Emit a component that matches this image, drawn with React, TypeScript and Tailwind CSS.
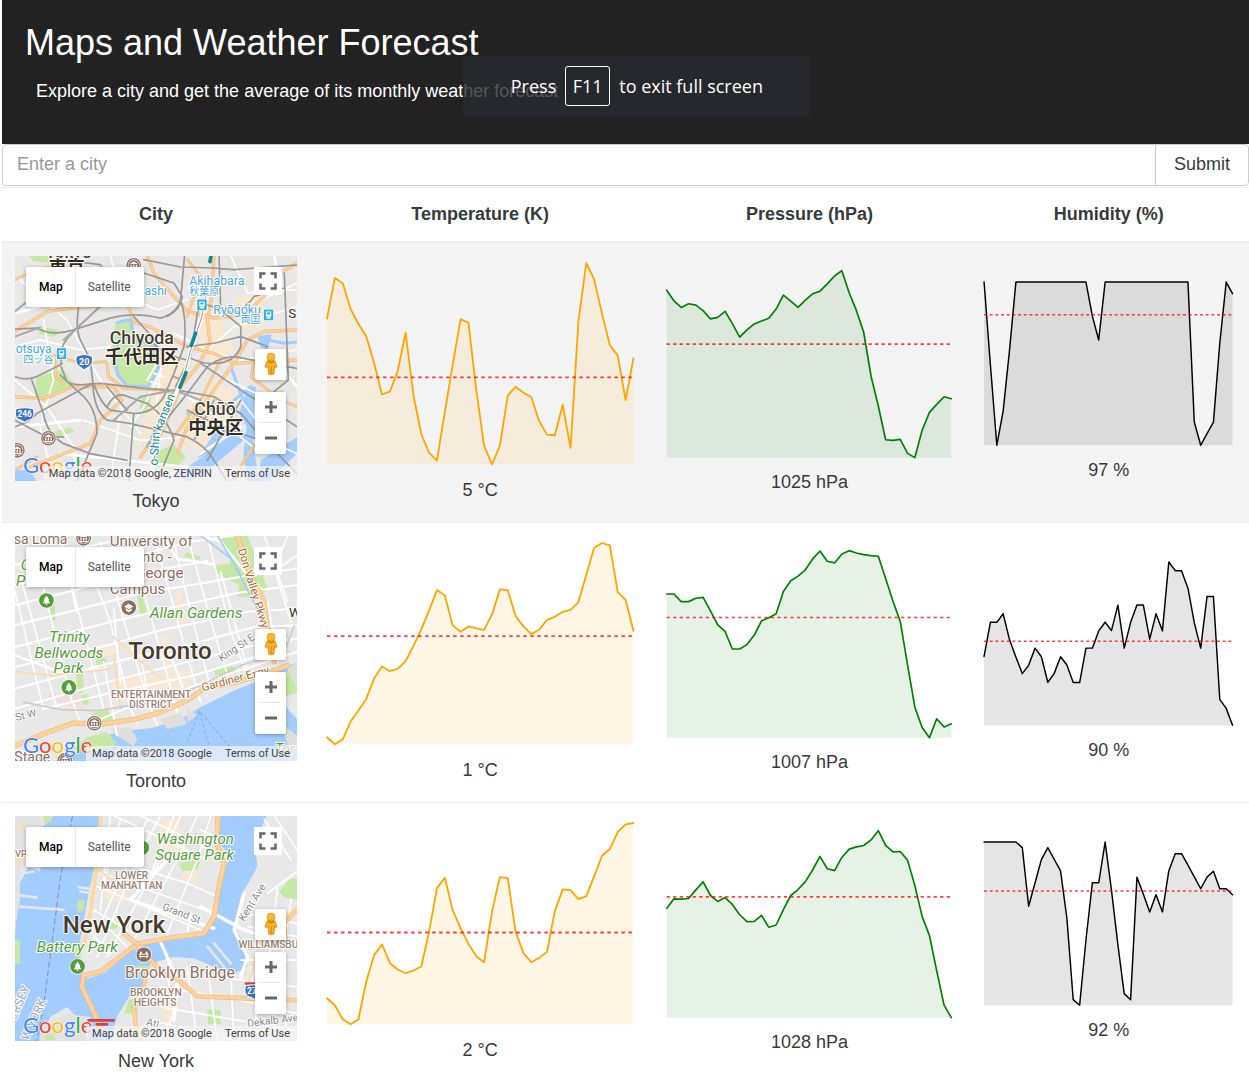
import React from "react";

type Series = { points: number[]; mean: number };

type City = {
  name: string;
  attribution: string;
  temperature: string;
  pressure: string;
  humidity: string;
  temperatureSeries: Series;
  pressureSeries: Series;
  humiditySeries: Series;
  map: React.ReactNode;
};

const PARK = "#c5e8a5";
const WATER = "#a3ccff";
const STONE = "#8d6e5e";
const GREEN = "#569d3c";

/* ---------- charts ---------- */

// Points are distances below the chart's ceiling, so larger values sit lower.
function Sparkline({ series, color, label }: { series: Series; color: string; label: string }) {
  const left = 5;
  const width = 306;
  const top = 5;
  const height = 201;
  const min = Math.min(...series.points);
  const max = Math.max(...series.points);
  const y = (v: number) => top + ((v - min) / (max - min)) * height;
  const x = (i: number) => left + (i / (series.points.length - 1)) * width;
  const line = series.points.map((v, i) => `${x(i).toFixed(1)},${y(v).toFixed(1)}`).join(" ");
  return (
    <svg viewBox="0 0 316 211" className="block h-auto w-full" role="img" aria-label={label}>
      <polygon
        points={`${left},${top + height} ${line} ${left + width},${top + height}`}
        fill={color}
        fillOpacity="0.1"
      />
      <polyline points={line} fill="none" stroke={color} strokeWidth="1.8" strokeLinejoin="round" strokeLinecap="round" />
      <line
        x1={left}
        x2={left + width}
        y1={y(series.mean)}
        y2={y(series.mean)}
        stroke="red"
        strokeOpacity="0.75"
        strokeWidth="1.8"
        strokeDasharray="3.5 3.5"
      />
    </svg>
  );
}

/* ---------- map drawing helpers ---------- */

function Roads({ d, color = "#ffffff", width = 6 }: { d: string; color?: string; width?: number }) {
  return <path d={d} fill="none" stroke={color} strokeWidth={width} strokeLinejoin="round" strokeLinecap="round" />;
}

function Highway({ d, width = 10 }: { d: string; width?: number }) {
  return (
    <>
      <Roads d={d} color="#f3b877" width={width} />
      <Roads d={d} color="#fdd29c" width={width - 4} />
    </>
  );
}

type LabelProps = {
  x: number;
  y: number;
  size: number;
  color: string;
  children: string;
  italic?: boolean;
  weight?: number;
  anchor?: "start" | "middle" | "end";
  rotate?: number;
};

function Label({ x, y, size, color, children, italic, weight = 400, anchor = "start", rotate = 0 }: LabelProps) {
  return (
    <text
      x={x}
      y={y}
      fontSize={size}
      fill={color}
      stroke="#ffffff"
      strokeWidth="6"
      strokeLinejoin="round"
      paintOrder="stroke"
      fontStyle={italic ? "italic" : "normal"}
      fontWeight={weight}
      textAnchor={anchor}
      transform={rotate ? `rotate(${rotate} ${x} ${y})` : undefined}
    >
      {children}
    </text>
  );
}

function TreePin({ x, y }: { x: number; y: number }) {
  return (
    <g transform={`translate(${x} ${y})`}>
      <circle r="24" fill="#fff" />
      <circle r="22" fill={GREEN} />
      <path d="M0 -15 L9 -1 L6 0 L11 8 L2 8 L2 13 L-2 13 L-2 8 L-11 8 L-6 0 L-9 -1 Z" fill="#fff" />
    </g>
  );
}

function MuseumPin({ x, y }: { x: number; y: number }) {
  return (
    <g transform={`translate(${x} ${y})`}>
      <circle r="24" fill="#fff" />
      <circle r="20" fill="#fff" stroke={STONE} strokeWidth="4" />
      <circle r="16" fill={STONE} />
      <path d="M-12 -4 L0 -12 L12 -4 Z M-10 -2 h4 v9 h-4 Z M-2 -2 h4 v9 h-4 Z M6 -2 h4 v9 h-4 Z M-12 8 h24 v4 h-24 Z" fill="#fff" />
    </g>
  );
}

function StationPin({ x, y }: { x: number; y: number }) {
  return (
    <g transform={`translate(${x} ${y})`}>
      <rect x="-16" y="-18" width="32" height="36" fill="#fff" />
      <rect x="-14" y="-16" width="28" height="32" rx="2" fill="#2fb0ea" />
      <path d="M-8 -10 h16 v16 h-16 Z M-8 11 l4 -4 h8 l4 4 Z" fill="#fff" />
      <path d="M-5 -7 h10 v6 h-10 Z" fill="#2fb0ea" />
    </g>
  );
}

function Shield({ x, y, text, scale = 1 }: { x: number; y: number; text: string; scale?: number }) {
  return (
    <g transform={`translate(${x} ${y}) scale(${scale})`}>
      <path
        d="M-24 -16 Q-12 -22 0 -22 Q12 -22 24 -16 Q28 6 14 14 Q4 20 0 24 Q-4 20 -14 14 Q-28 6 -24 -16 Z"
        fill="#3b74c4"
        stroke="#fff"
        strokeWidth="3"
      />
      <text y="9" fontSize="27" fontWeight="700" fill="#fff" textAnchor="middle">
        {text}
      </text>
    </g>
  );
}

function WideShield({ x, y, text }: { x: number; y: number; text: string }) {
  return (
    <g transform={`translate(${x} ${y})`}>
      <path
        d="M-26 -16 Q0 -22 26 -16 Q32 8 18 16 Q8 20 0 24 Q-8 20 -18 16 Q-32 8 -26 -16 Z"
        fill="#3b74c4"
        stroke="#fff"
        strokeWidth="3"
      />
      <text y="9" fontSize="25" fontWeight="700" fill="#fff" textAnchor="middle">
        {text}
      </text>
    </g>
  );
}

const TokyoMap = (
  <svg viewBox="45 48 843 675" className="block h-full w-full" preserveAspectRatio="xMidYMid slice" aria-hidden="true">
    <rect x="45" y="48" width="843" height="675" fill="#e9e8e6" />
    <path d="M500 330 L560 360 L470 560 L400 640 L440 520 Z M560 500 L640 420 L720 470 L620 640 L540 600 Z M560 60 L600 180 L650 230 L700 330 L640 380 L600 320 Z M700 180 L780 160 L800 250 L720 280 Z" fill="#f8e8d0" />
    <path d="M345 250 L390 235 L402 275 L440 305 L472 312 L478 372 L462 412 L440 440 L372 436 L350 404 L332 372 Z" fill={PARK} />
    <path d="M110 412 L190 388 L222 432 L160 470 L128 488 L105 470 Z M425 470 L452 472 L440 520 L416 512 Z M85 48 L160 48 L150 70 L100 64 Z M120 262 L175 270 L165 290 L118 282 Z M455 640 L520 612 L556 650 L520 690 L460 690 Z M160 575 L210 562 L222 574 L172 590 Z M800 460 L846 450 L850 475 L800 480 Z" fill={PARK} />
    <Roads d="M350 248 L390 238 L400 285 L440 306 M470 318 L450 345 L478 375 L460 412 L442 440 L380 438 L352 405 L342 350 L358 290 Z" color={WATER} width={9} />
    <path d="M742 438 L765 440 L758 520 L770 560 L755 600 L775 723 L740 723 L728 640 L738 560 L715 520 Z M715 560 L738 592 L600 708 L560 723 L530 700 L620 640 Z M770 290 L812 282 L800 330 L780 322 Z M640 580 L700 556 L720 590 L620 640 L590 655 Z M45 690 L90 690 L110 723 L45 723 Z M780 660 L888 590 L888 640 L800 723 L770 723 Z" fill={WATER} />
    <Roads d="M700 480 L750 440 M800 300 L850 310 L888 306 M690 380 L742 520 M560 520 L680 500 L760 540" color={WATER} width={9} />
    <Roads d="M45 320 L120 300 L240 330 L330 320 M60 120 L200 240 L300 420 L420 580 M130 240 L160 420 L120 560 L160 720 M330 48 L360 160 L470 210 L560 180 M250 540 L420 600 L560 590 M45 420 L140 500 L220 620 L230 723 M600 200 L720 210 L888 130 M620 330 L720 360 L888 330 M560 470 L660 540 L780 640 M640 400 L850 500 M520 280 L620 330 L700 260 L888 200 M360 520 L330 720 M470 370 L440 420 M500 350 L430 500 L390 560 M690 48 L740 160 L888 150 M720 480 L820 610 L888 640 M460 400 L490 410 M450 425 L480 435 M485 350 L465 520" width={5} />
    <Roads d="M180 640 L560 680 M720 560 L600 640 M45 560 L240 540 M820 360 L888 440 M820 48 L840 160 M45 220 L120 200" color="#fff" width={8} />
    <Highway d="M45 275 L140 215 L220 205 L380 190 L402 248 L450 262 L560 320 L640 340 L700 370 L888 360" />
    <Highway d="M320 372 L325 410 L370 444 L420 446 L500 450 L525 480 L480 560 L420 650" />
    <Highway d="M640 48 L632 180 L620 240 L628 310 L590 380 L540 440 L500 540 L470 600" />
    <Highway d="M888 70 L820 110 L790 170 L730 225 L640 235 L560 215 L520 170 L460 100 L440 48" />
    <Highway d="M888 270 L790 275 L740 300 L700 370 L640 450 L560 560 L530 640" />
    <Highway d="M45 470 L130 475 L220 440 L340 440 L365 480 L300 540 L270 610 L180 645 L90 680" />
    <Highway d="M560 60 L600 110 L560 230 M660 360 L600 480 L520 590 M45 120 L110 90 L190 75" width={8} />
    <Highway d="M760 370 L750 410 L840 480 L888 500 M800 560 L730 660 L700 723 M45 690 L110 650" width={8} />
    <Highway d="M160 345 L240 370 L315 365 M190 430 L165 410 L170 350" width={8} />
    <Roads
      d="M45 268 L110 265 Q160 290 220 270 L330 235 Q400 215 480 235 Q530 220 540 180 L552 48 M45 410 Q80 425 120 405 L185 372 Q170 320 220 275 L300 198 L330 120 L300 75 L180 60 M540 180 Q560 240 550 320 L520 400 L490 470 Q460 520 400 520 L330 510 Q300 490 280 430 Q230 440 200 425 L180 372 M235 205 Q225 260 240 300 L270 360 L278 430 Q280 510 320 540 L390 550 L560 590 Q620 620 640 660 L680 723 M45 560 Q90 545 110 520 L230 455 Q270 430 300 430 L430 445 L520 452 M95 420 L130 520 Q140 580 190 610 L270 640 L380 660 M180 405 L240 460 Q290 500 290 580 L230 723 M400 520 L385 723 M320 500 Q340 460 370 465 L440 490 Q500 530 520 600 L470 723 M888 76 L700 90 L640 85 L540 82 L430 60 M600 190 L700 220 Q740 200 760 170 L850 145 M850 100 L862 420 L800 470 M560 350 Q610 375 640 370 Q700 370 720 320 L720 260 L660 210 L655 48 M530 450 L640 470 L720 520 L790 600 L888 700 M600 370 L690 430 L888 560 M720 480 L620 660 M480 560 L560 460 L620 380 Q660 350 700 350 L888 385 M500 230 Q540 210 545 170 L520 130 L430 100 M610 180 L590 220 L570 350 L525 440 M560 510 L660 560 L780 600 M400 230 L445 280 Q460 340 560 360 M800 320 L720 290 L640 310 L560 320 M320 440 L380 510 M45 540 L140 590 L190 590"
      color="#999999"
      width={5}
    />
    <Roads d="M340 540 L420 470 L520 450 L600 480 M45 215 L75 190 M45 290 L120 262 M520 410 L545 420 L510 470 L440 620 M640 480 L580 600 M190 300 L300 200" color="#a9a9a9" width={6} />
    <Roads d="M622 130 L604 230 L570 330 L552 400 L470 590 L450 723" color="#ffffff" width={11} />
    <Roads d="M622 130 L604 230 L570 330 L552 400" color="#9c9c9c" width={3} />
    <Roads d="M631 48 L628 66 M585 280 L572 316 M556 398 L538 442" color="#138796" width={11} />
    <MuseumPin x={145} y={594} />
    <MuseumPin x={52} y={630} />
    <MuseumPin x={400} y={77} />
    <Label x={205} y={54} size={52} color="#473c2b" weight={500} anchor="middle">Tokyo</Label>
    <Label x={200} y={102} size={54} color="#332c20" weight={700} anchor="middle">東京</Label>
    <Label x={566} y={135} size={37} color="#4aa9d8">Akihabara</Label>
    <Label x={566} y={165} size={30} color="#4aa9d8">秋葉原</Label>
    <Label x={432} y={165} size={36} color="#4aa9d8">ashi</Label>
    <Label x={638} y={224} size={37} color="#4aa9d8">Ryōgoku</Label>
    <Label x={720} y={251} size={29} color="#4aa9d8">両国</Label>
    <Label x={47} y={338} size={36} color="#4aa9d8">otsuya</Label>
    <Label x={70} y={369} size={30} color="#4aa9d8">四ッ谷</Label>
    <StationPin x={604} y={195} />
    <StationPin x={803} y={225} />
    <StationPin x={184} y={341} />
    <Label x={862} y={234} size={40} color="#332c20">S</Label>
    <Label x={424} y={312} size={53} color="#473c2b" weight={500} anchor="middle">Chiyoda</Label>
    <Label x={424} y={369} size={55} color="#332c20" weight={700} anchor="middle">千代田区</Label>
    <Label x={643} y={524} size={53} color="#473c2b" weight={500} anchor="middle">Chūō</Label>
    <Label x={645} y={581} size={55} color="#332c20" weight={700} anchor="middle">中央区</Label>
    <Label x={471} y={676} size={36} color="#138796" rotate={-86}>o-Shin</Label>
    <Label x={481} y={574} size={36} color="#138796" rotate={-68}>kansen</Label>
    <Shield x={252} y={366} text="20" />
    <WideShield x={74} y={522} text="246" />
  </svg>
);

const TorontoMap = (
  <svg viewBox="45 42 843 675" className="block h-full w-full" preserveAspectRatio="xMidYMid slice" aria-hidden="true">
    <rect x="45" y="42" width="843" height="675" fill="#e8e8e8" />
    <path d="M660 42 L740 42 L770 120 L800 200 L770 230 L710 225 L715 190 L640 150 L650 130 L690 125 Z M410 222 L425 220 L440 275 L420 280 Z M148 240 L162 236 L166 292 L150 298 Z M228 440 L248 440 L250 510 L232 515 Z M240 520 L265 515 L265 548 L245 548 Z M270 575 L320 560 L340 590 L300 600 Z M555 90 L600 105 L595 115 L550 105 Z M285 405 L318 410 L318 430 L290 430 Z M640 440 L700 432 L702 450 L645 462 Z" fill={PARK} />
    <path d="M330 475 L580 440 L560 520 L480 545 L340 535 Z M480 345 L500 340 L530 470 L500 480 Z M295 360 L340 370 L345 405 L300 400 Z M520 210 L540 205 L560 300 L540 305 Z" fill="#f8e9d6" />
    <path d="M130 515 L240 510 L250 560 L180 550 Z M640 530 L670 525 L665 555 L640 560 Z" fill="#f2dede" />
    <path d="M888 505 L830 525 L860 560 L888 590 L888 717 L160 717 L230 690 L260 660 L310 640 L380 625 L450 618 L540 590 L600 555 L700 505 L800 465 L835 445 L888 420 Z" fill={WATER} />
    <path d="M260 645 L320 630 L350 665 L275 690 L220 680 Z M820 470 L888 430 L888 510 L850 525 Z" fill={PARK} />
    <path d="M330 620 L390 615 L410 650 L400 672 L350 640 Z M560 555 L590 580 L560 600 Z M860 440 L888 420 L888 500 Z M840 600 L888 640 L888 680 L860 670 Z M480 590 L540 570 L560 605 L500 620 Z" fill="#dedfda" />
    <Roads d="M45 130 L240 80 L330 60 M45 190 L420 100 L560 62 L700 42 M45 250 L440 150 L620 118 M45 310 L420 215 L720 165 L888 140 M45 375 L330 300 L700 215 L888 190 M45 435 L340 365 L480 325 L740 270 L888 260 M45 500 L340 420 L560 370 L760 315 L888 310 M45 560 L320 480 L520 430 L760 370 L888 350 M130 560 L340 510 L580 460 L760 405 M280 600 L420 540 L560 500 L700 450 L888 390" width={6} />
    <Roads d="M60 160 L170 560 M110 120 L210 520 L240 600 M190 90 L250 330 L310 560 M250 90 L330 300 L390 560 L410 600 M300 60 L440 530 L470 610 M380 42 L470 350 L530 570 M460 42 L540 330 L600 540 M520 60 L570 270 L630 500 M560 42 L640 330 L690 490 M620 42 L690 330 L740 460 M660 150 L740 440 M800 240 L830 420 M45 210 L130 560 M310 420 L350 640 M340 260 L360 480 M420 400 L450 560 M860 42 L820 140 L870 300 M888 100 L820 150 M790 42 L860 240" width={5} />
    <Roads d="M45 400 L180 450 L320 440 M600 42 L660 60 L740 160 L780 200 M500 62 L530 112 L640 128 M510 400 L560 530 M180 42 L230 270" width={7} />
    <Roads d="M45 450 L160 460 L330 440 M340 400 L360 560 M340 345 L480 470" color="#fbdcb5" width={6} />
    <Roads d="M70 540 L180 562 L290 565 L420 545 L520 520 M520 520 L600 490 L720 430 L850 390 L880 310" color="#cccccc" width={5} />
    <Roads d="M600 42 L690 110 L790 300 M650 42 L720 160" color={WATER} width={5} />
    <path d="M560 660 L596 565 L700 690 M596 570 L640 717" fill="none" stroke="#82afea" strokeWidth="3" strokeDasharray="12 6" />
    <Highway d="M45 670 L130 635 L220 602 L300 606 L400 592 L480 570 L560 535 L610 500 L700 482 L790 455 L860 430" width={15} />
    <Highway d="M710 42 L725 90 L750 160 L790 240 L800 320 L820 420" width={15} />
    <Label x={41} y={66} size={42} color={STONE}>sa Loma</Label>
    <MuseumPin x={250} y={50} />
    <Label x={328} y={74} size={45} color={STONE}>University of</Label>
    <Label x={334} y={121} size={45} color={STONE}>Toronto -</Label>
    <Label x={340} y={168} size={45} color={STONE}>St. George</Label>
    <Label x={328} y={216} size={45} color={STONE}>Campus</Label>
    <g transform="translate(385 257)">
      <circle r="24" fill="#fff" />
      <circle r="22" fill={STONE} />
      <path d="M-14 -3 L0 -11 L14 -3 L0 5 Z M-9 2 L0 8 L9 2 V9 L0 14 L-9 9 Z" fill="#fff" />
    </g>
    <Label x={62} y={146} size={45} color={GREEN} italic>Christie</Label>
    <Label x={48} y={194} size={45} color={GREEN} italic>Pits</Label>
    <TreePin x={139} y={236} />
    <Label x={448} y={287} size={46} color={GREEN} italic>Allan Gardens</Label>
    <Label x={208} y={360} size={46} color={GREEN} italic anchor="middle">Trinity</Label>
    <Label x={206} y={407} size={46} color={GREEN} italic anchor="middle">Bellwoods</Label>
    <Label x={205} y={454} size={46} color={GREEN} italic anchor="middle">Park</Label>
    <TreePin x={206} y={496} />
    <Label x={508} y={411} size={72} color="#473c2b" weight={500} anchor="middle">Toronto</Label>
    <Label x={452} y={526} size={30} color="#9b8171" weight={500} anchor="middle">ENTERTAINMENT</Label>
    <Label x={451} y={556} size={30} color="#9b8171" weight={500} anchor="middle">DISTRICT</Label>
    <Label x={662} y={420} size={31} color="#888888" rotate={-34}>King St E</Label>
    <Label x={606} y={508} size={34} color="#a5692f" rotate={-15}>Gardiner Expy</Label>
    <Label x={711} y={84} size={34} color="#a5692f" rotate={73}>Don Valley Pkwy</Label>
    <Label x={864} y={286} size={40} color="#332c20">W</Label>
    <Label x={49} y={596} size={31} color="#888888" rotate={-14}>St W</Label>
    <MuseumPin x={282} y={603} />
    <MuseumPin x={194} y={714} />
    <Label x={43} y={720} size={42} color={STONE}>Stage</Label>
    <Label x={330} y={708} size={42} color="#6d8ac0">Toronto</Label>
    <Label x={822} y={696} size={42} color={GREEN} italic>Tor</Label>
  </svg>
);

const NewYorkMap = (
  <svg viewBox="45 48 843 675" className="block h-full w-full" preserveAspectRatio="xMidYMid slice" aria-hidden="true">
    <rect x="45" y="48" width="843" height="675" fill="#e8e8e8" />
    <path
      d="M160 48 L298 48 L285 190 L265 280 L240 420 L236 490 L262 535 L310 520 L390 455 L450 425 L600 405 L630 370 L650 250 L690 170 L655 130 L660 48 L798 48 L760 130 L770 200 L720 290 L700 380 L735 440 L740 500 L700 520 L640 500 L580 475 L520 470 L450 490 L430 560 L385 590 L350 650 L330 723 L170 723 L240 660 L200 620 L150 650 L120 723 L45 723 L45 400 L60 250 L85 200 L120 215 L130 150 L120 90 Z"
      fill={WATER}
    />
    <path d="M45 48 L120 48 L130 90 L105 190 L60 200 L60 300 L45 380 Z M120 680 L200 640 L270 650 L260 723 L120 723 Z" fill="#e2e2e2" />
    <path d="M130 48 L150 48 L155 66 L130 72 Z M232 302 L255 300 L248 335 L232 335 Z M535 190 L600 180 L590 210 L545 215 Z M330 370 L355 362 L350 385 L325 390 Z M45 420 L60 422 L60 490 L45 490 Z M620 628 L660 630 L660 670 L622 672 Z M865 240 L888 235 L888 300 L850 292 L835 275 Z M820 430 L860 428 L860 445 L822 445 Z M385 600 L420 590 L410 640 L370 640 Z M135 704 L160 700 L165 720 L135 720 Z M375 500 L445 495 L445 515 L375 515 Z M215 430 L248 430 L244 470 L225 470 Z" fill={PARK} />
    <path d="M310 270 L370 265 L385 300 L320 310 Z M470 60 L530 60 L560 160 L500 170 Z M545 215 L590 215 L590 255 L545 250 Z M480 630 L520 590 L540 630 L500 680 Z" fill="#f8e9d6" />
    <Roads d="M45 225 L100 215 M45 150 L120 145 M50 285 L110 293 M60 320 L190 330 M235 262 L275 268 M240 275 L275 280 M640 430 L690 490 M620 440 L670 500 M770 205 L815 220" color="#e3e6ea" width={8} />
    <Roads d="M600 90 L640 110 M340 48 L620 180 M310 120 L430 170 M300 220 L640 340 M290 260 L600 390 M300 170 L560 250 L650 290 M420 48 L650 160 M280 330 L400 400 M330 48 L300 330 M360 60 L310 250 M440 60 L270 440 M480 48 L410 180 L290 470 M540 48 L480 180 L320 470 M590 48 L540 160 L400 420 M630 48 L590 180 L500 400 M520 48 L440 250 M570 340 L560 400 M300 360 L380 440 M275 400 L330 460" width={5} />
    <Roads d="M790 60 L870 180 M820 48 L888 150 M720 480 L888 480 M730 340 L888 370 M740 380 L888 410 M830 260 L800 520 M870 300 L830 560 M560 520 L888 560 M480 560 L720 600 L888 640 M560 500 L590 723 M620 500 L650 723 M690 520 L700 723 M750 500 L770 700 M480 620 L888 690 M450 660 L720 723 M840 560 L860 723 M500 520 L520 640 L480 723 M888 215 L800 280" width={5} />
    <Roads d="M600 320 L720 385 L760 400 M480 425 L530 540 L520 660 M500 180 L390 300 M390 300 L640 385 M730 280 L700 390 L740 470 L720 530" width={10} />
    <Roads d="M301 48 L298 130 L272 330 L250 440" color="#fbd9a2" width={12} />
    <Roads d="M285 205 L330 235 L390 260 M45 190 L80 170 M45 90 L75 75 M888 320 L780 420 L740 560" color="#fbe0a8" width={7} />
    <path d="M217 48 L180 240 L150 470 L130 620 L110 723" fill="none" stroke="#7e92ae" strokeWidth="3" strokeDasharray="18 8" />
    <Highway d="M652 48 L648 130 L670 190 L655 260 L640 350 L610 400 L500 415 L410 432 L360 470 L300 515 L250 525 L245 560 L290 655 L300 690" width={15} />
    <Highway d="M370 400 L410 432 L440 470 L470 500 L540 545 L590 588 L750 595 L888 600" width={14} />
    <Highway d="M440 510 L430 560 L400 620 L408 690 L420 723 M888 330 L850 370 L855 440" width={12} />
    <Roads d="M265 660 L340 660 M290 672 L320 672 M735 550 L780 550" color="#d8403c" width={8} />
    <path d="M425 123 A21 21 0 0 1 425 165 Z" fill={GREEN} />
    <Label x={584} y={134} size={45} color={GREEN} italic anchor="middle">Washington</Label>
    <Label x={582} y={182} size={45} color={GREEN} italic anchor="middle">Square Park</Label>
    <Label x={394} y={238} size={30} color="#9b8171" weight={500} anchor="middle">LOWER</Label>
    <Label x={394} y={268} size={30} color="#9b8171" weight={500} anchor="middle">MANHATTAN</Label>
    <Label x={484} y={329} size={31} color="#888888" rotate={21}>Grand St</Label>
    <Label x={341} y={398} size={72} color="#473c2b" weight={500} anchor="middle">New York</Label>
    <Label x={231} y={457} size={46} color={GREEN} italic anchor="middle">Battery Park</Label>
    <TreePin x={232} y={499} />
    <g transform="translate(430 464)">
      <circle r="24" fill="#fff" />
      <circle r="22" fill={STONE} />
      <path d="M-14 5 H14 M-9 -9 V11 M9 -9 V11 M-14 1 Q-10 -3 -9 -8 Q0 8 9 -8 Q10 -3 14 1" fill="none" stroke="#fff" strokeWidth="3" />
    </g>
    <Label x={374} y={534} size={47} color={STONE}>Brooklyn Bridge</Label>
    <Label x={466} y={587} size={31} color="#9b8171" weight={500} anchor="middle">BROOKLYN</Label>
    <Label x={464} y={617} size={31} color="#9b8171" weight={500} anchor="middle">HEIGHTS</Label>
    <Label x={713} y={445} size={30} color="#9b8171" weight={500}>WILLIAMSBU</Label>
    <Label x={730} y={366} size={32} color="#888888" rotate={-58}>Kent Ave</Label>
    <Label x={741} y={680} size={31} color="#888888" rotate={-7}>Dekalb Ave</Label>
    <Label x={436} y={674} size={31} color="#888888" rotate={14}>Atl</Label>
    <Label x={45} y={173} size={28} color="#9b8171" weight={500}>VP</Label>
    <Label x={47} y={660} size={36} color="#a0a4aa" rotate={-66}>ERSEY</Label>
    <Label x={85} y={722} size={36} color="#a0a4aa" rotate={-66}>W YORK</Label>
    <WideShield x={760} y={573} text="278" />
  </svg>
);

/* ---------- map widget ---------- */

function Pegman() {
  return (
    <svg viewBox="0 0 14 24" className="h-6 w-[14px]" aria-hidden="true">
      <path d="M3 9 Q7 7 11 9 L13 15 L11.500 16 L10.500 14 L10 22 L7.500 23 L4.500 22 L4 14 L2.500 16 L1 15 Z" fill="#f5b024" stroke="#d98c12" strokeWidth="0.8" />
      <circle cx="7" cy="5" r="4" fill="#fbb829" stroke="#d98c12" strokeWidth="0.6" />
      <path d="M4 9 Q7 12 10 9" fill="none" stroke="#c47a10" strokeWidth="1.200" />
      <path d="M7 15 V22" stroke="#c47a10" strokeWidth="0.8" />
    </svg>
  );
}

function MapWidget({ city }: { city: City }) {
  return (
    <div className="relative h-[225px] overflow-hidden text-left font-[Roboto,'Noto_Sans_CJK_JP',sans-serif]">
      {city.map}
      <div className="absolute bottom-1 left-2 flex text-[22px] leading-6 [-webkit-text-stroke:1px_white] [paint-order:stroke_fill] font-[Lato,sans-serif]">
        <span className="text-[#4285f4]">G</span>
        <span className="text-[#ea4335]">o</span>
        <span className="text-[#fbbc05]">o</span>
        <span className="text-[#4285f4]">g</span>
        <span className="text-[#34a853]">l</span>
        <span className="text-[#ea4335]">e</span>
      </div>
      <div className="absolute bottom-0 right-0 flex h-[15px] bg-[#f5f5f5]/70 text-[11px] leading-[15px] text-[#444]">
        <span className="px-[6px]">{city.attribution}</span>
        <a href="#terms" className="px-[7px]">
          Terms of Use
        </a>
      </div>
      <div className="absolute left-[11px] top-[11px] flex h-10 rounded-[2px] bg-white text-xs shadow-[0_1px_4px_rgba(0,0,0,0.3)]">
        <button type="button" className="border-r border-[#e8e8e8] px-3 pl-[13px] font-medium text-black">
          Map
        </button>
        <button type="button" className="px-[13px] pl-3 text-[#565656]">
          Satellite
        </button>
      </div>
      <button
        type="button"
        aria-label="Toggle fullscreen view"
        className="absolute right-[15px] top-[11px] flex h-7 w-7 items-center justify-center bg-white"
      >
        <svg viewBox="0 0 18 18" className="h-[18px] w-[18px]" fill="none" stroke="#666" strokeWidth="2.500" aria-hidden="true">
          <path d="M1.500 6.500 V1.500 H6.500 M11.500 1.500 H16.500 V6.500 M16.500 11.500 V16.500 H11.500 M6.500 16.500 H1.500 V11.500" />
        </svg>
      </button>
      <div className="absolute right-[11px] top-[93px] flex flex-col gap-3">
        <button
          type="button"
          aria-label="Street View"
          className="flex h-[31px] w-[31px] items-center justify-center rounded-[2px] bg-white shadow-[0_1px_4px_rgba(0,0,0,0.3)]"
        >
          <Pegman />
        </button>
        <div className="flex w-[31px] flex-col items-center rounded-[2px] bg-white shadow-[0_1px_4px_rgba(0,0,0,0.3)]">
          <button type="button" aria-label="Zoom in" className="flex h-[30px] w-full items-center justify-center">
            <svg viewBox="0 0 12 12" className="h-3 w-3" stroke="#666" strokeWidth="3" aria-hidden="true">
              <path d="M0 6 H12 M6 0 V12" />
            </svg>
          </button>
          <div className="h-px w-[21px] bg-[#e6e6e6]" />
          <button type="button" aria-label="Zoom out" className="flex h-[31px] w-full items-center justify-center">
            <svg viewBox="0 0 12 12" className="h-3 w-3" stroke="#666" strokeWidth="3" aria-hidden="true">
              <path d="M0 6 H12" />
            </svg>
          </button>
        </div>
      </div>
    </div>
  );
}

/* ---------- data ---------- */

const cities: City[] = [
  {
    name: "Tokyo",
    attribution: "Map data ©2018 Google, ZENRIN",
    temperature: "5 °C",
    pressure: "1025 hPa",
    humidity: "97 %",
    map: TokyoMap,
    temperatureSeries: {
      mean: 412,
      points: [236, 114, 130, 207, 252, 289, 370, 463, 455, 393, 279, 465, 583, 639, 662, 515, 375, 238, 248, 450, 618, 673, 618, 467, 440, 458, 471, 543, 584, 586, 495, 624, 243, 69, 118, 220, 316, 346, 480, 355],
    },
    pressureSeries: {
      mean: 313,
      points: [150, 182, 202, 191, 195, 212, 237, 232, 214, 251, 292, 270, 252, 243, 235, 207, 165, 183, 202, 180, 161, 153, 131, 107, 91, 158, 212, 277, 410, 500, 602, 604, 601, 643, 656, 573, 519, 495, 472, 478],
    },
    humiditySeries: {
      mean: 224,
      points: [125, 375, 618, 515, 330, 125, 125, 125, 125, 125, 125, 125, 125, 125, 125, 125, 125, 228, 300, 125, 125, 125, 125, 125, 125, 125, 125, 125, 125, 125, 125, 125, 125, 548, 618, 583, 548, 310, 125, 160],
    },
  },
  {
    name: "Toronto",
    attribution: "Map data ©2018 Google",
    temperature: "1 °C",
    pressure: "1007 hPa",
    humidity: "90 %",
    map: TorontoMap,
    temperatureSeries: {
      mean: 349,
      points: [652, 673, 658, 605, 572, 537, 475, 440, 454, 447, 424, 378, 328, 272, 211, 227, 317, 336, 320, 326, 330, 284, 209, 211, 289, 320, 343, 330, 300, 291, 276, 270, 247, 165, 84, 70, 77, 216, 240, 333],
    },
    pressureSeries: {
      mean: 293,
      points: [222, 222, 245, 245, 235, 232, 273, 315, 335, 388, 388, 375, 346, 303, 294, 282, 214, 182, 168, 149, 116, 92, 123, 128, 101, 91, 98, 103, 106, 108, 175, 243, 305, 435, 564, 625, 656, 599, 624, 614],
    },
    humiditySeries: {
      mean: 364,
      points: [410, 307, 307, 281, 360, 412, 462, 437, 385, 411, 488, 462, 411, 436, 489, 489, 385, 385, 333, 307, 332, 255, 385, 307, 255, 255, 358, 281, 333, 125, 151, 151, 204, 308, 385, 229, 229, 540, 567, 618],
    },
  },
  {
    name: "New York",
    attribution: "Map data ©2018 Google",
    temperature: "2 °C",
    pressure: "1028 hPa",
    humidity: "92 %",
    map: NewYorkMap,
    temperatureSeries: {
      mean: 398,
      points: [595, 616, 658, 673, 658, 545, 465, 434, 490, 509, 520, 512, 500, 395, 265, 234, 331, 385, 432, 469, 487, 335, 232, 235, 395, 460, 487, 474, 456, 334, 269, 271, 298, 289, 230, 168, 148, 97, 74, 70],
    },
    pressureSeries: {
      mean: 291,
      points: [326, 297, 298, 296, 270, 246, 287, 305, 293, 314, 345, 366, 365, 347, 383, 376, 330, 287, 269, 245, 210, 169, 206, 212, 172, 147, 140, 136, 119, 91, 135, 155, 154, 180, 257, 350, 408, 515, 618, 656],
    },
    humiditySeries: {
      mean: 273,
      points: [125, 125, 125, 125, 125, 125, 142, 319, 248, 178, 142, 177, 212, 355, 601, 618, 420, 248, 248, 125, 270, 435, 583, 601, 231, 283, 336, 284, 336, 212, 160, 160, 195, 230, 266, 231, 213, 266, 266, 284],
    },
  },
];

/* ---------- page ---------- */

function ChartCell({ series, color, value, label }: { series: Series; color: string; value: string; label: string }) {
  return (
    <td className="px-3 py-2 align-middle">
      <Sparkline series={series} color={color} label={label} />
      <div className="pb-[3px] pt-[7px]">{value}</div>
    </td>
  );
}

export default function App() {
  return (
    <div className="bg-white pl-[2px] font-['Liberation_Sans',Arial,sans-serif] text-lg leading-[26px] text-[#373a3c]">
      <header className="relative h-36 bg-[#222] text-white">
        <h1 className="px-[23px] pt-[23px] text-4xl leading-10">Maps and Weather Forecast</h1>
        <p className="px-[34px] pt-[15px]">Explore a city and get the average of its monthly weather forecast</p>
        <div
          role="status"
          className="absolute left-[37%] top-14 flex h-[60px] w-[347px] items-center justify-center gap-[9px] bg-[#272b2f]/80 pb-px font-['Open_Sans',sans-serif] text-lg"
        >
          <span>Press</span>
          <kbd className="flex h-10 w-[45px] items-center justify-center rounded-[3px] border border-white font-['Open_Sans',sans-serif]">
            F11
          </kbd>
          <span>to exit full screen</span>
        </div>
      </header>

      <form className="flex h-[42px]" onSubmit={(e) => e.preventDefault()}>
        <input
          type="text"
          aria-label="Enter a city"
          placeholder="Enter a city"
          className="min-w-0 flex-1 rounded-l border border-[#ccc] bg-white px-[14px] pb-[2px] placeholder:text-[#999] focus:outline-none"
        />
        <button type="submit" className="-ml-px rounded-r border border-[#ccc] bg-white px-[18px] pb-[2px]">
          Submit
        </button>
      </form>

      <table className="mt-px w-full table-fixed border-collapse text-center">
        <colgroup>
          <col className="w-[24.7%]" />
          <col className="w-[27.3%]" />
          <col className="w-[25.5%]" />
          <col />
        </colgroup>
        <thead>
          <tr className="h-[54px] border-t border-[#eceeef]">
            <th scope="col">City</th>
            <th scope="col">Temperature (K)</th>
            <th scope="col">Pressure (hPa)</th>
            <th scope="col">Humidity (%)</th>
          </tr>
        </thead>
        <tbody>
          {cities.map((city) => (
            <tr key={city.name} className="border-t border-[#eceeef] first:border-t-2 first:bg-[#f4f4f4]">
              <td className="px-[13px] pb-2 pt-[13px] align-middle">
                <MapWidget city={city} />
                <div className="pt-[7px]">{city.name}</div>
              </td>
              <ChartCell series={city.temperatureSeries} color="orange" value={city.temperature} label={`${city.name} temperature`} />
              <ChartCell series={city.pressureSeries} color="green" value={city.pressure} label={`${city.name} pressure`} />
              <ChartCell series={city.humiditySeries} color="black" value={city.humidity} label={`${city.name} humidity`} />
            </tr>
          ))}
        </tbody>
      </table>
    </div>
  );
}
